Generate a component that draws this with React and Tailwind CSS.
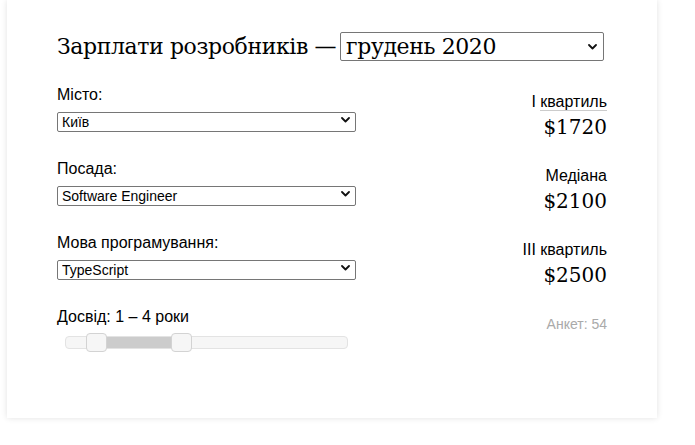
import React from 'react';

const serif = { fontFamily: '"DejaVu Serif", Georgia, serif' };

function Chevron({ className }) {
  return (
    <svg className={className} width="9" height="6" viewBox="0 0 9 6" fill="none">
      <path d="M1 1l3.5 3.5L8 1" stroke="#111" strokeWidth="1.8" strokeLinecap="round" strokeLinejoin="round" />
    </svg>
  );
}

function Select({ value }) {
  return (
    <div className="relative w-[299px] h-[20px]">
      <select
        defaultValue={value}
        className="appearance-none w-full h-full border border-[#767676] rounded-[2px] bg-white pl-[4px] text-[14px] leading-[18px] text-black font-['Liberation_Sans',Arial,sans-serif]"
      >
        <option>{value}</option>
      </select>
      <Chevron className="absolute right-[6px] top-[7px] pointer-events-none" />
    </div>
  );
}

function Field({ label, value }) {
  return (
    <div className="mb-[30px]">
      <div className="text-[16px] leading-[18px] mb-[6px]">{label}</div>
      <Select value={value} />
    </div>
  );
}

function Stat({ label, abbr, value }) {
  return (
    <div className="h-[74px]">
      <div className="text-[16px] leading-[18px]">
        {label}
        {abbr && <span className="border-b border-[#ccc]">{abbr}</span>}
      </div>
      <div className="text-[20px] leading-[26px] mt-[3px]" style={serif}>{value}</div>
    </div>
  );
}

export default function App() {
  return (
    <div className="bg-white w-[695px] h-[445px] font-['Liberation_Sans',Arial,sans-serif] text-black">
      <div className="ml-[7px] w-[650px] h-[418px] bg-white shadow-[0_0_6px_rgba(0,0,0,0.12)] px-[50px] pt-[32px]">
        <div className="flex items-center">
          <h1 className="text-[22px] leading-[29px] tracking-[-0.4px] whitespace-nowrap" style={serif}>Зарплати розробників —</h1>
          <div className="relative ml-[4px] w-[264px] h-[29px]">
            <select
              defaultValue="грудень 2020"
              className="appearance-none w-full h-full border border-[#767676] rounded-[2px] bg-white pl-[5px] text-[22px] leading-[27px] tracking-[-0.4px]"
              style={serif}
            >
              <option>грудень 2020</option>
            </select>
            <Chevron className="absolute right-[7px] top-[12px] pointer-events-none" />
          </div>
        </div>

        <div className="flex justify-between mt-[25px]">
          <div className="w-[299px]">
            <Field label="Місто:" value="Київ" />
            <Field label="Посада:" value="Software Engineer" />
            <Field label="Мова програмування:" value="TypeScript" />
            <div className="text-[16px] leading-[18px]">Досвід: 1 – 4 роки</div>
            <div className="relative mt-[10px] ml-[8px] w-[283px] h-[13px] rounded-[4px] border border-[#e3e3e3] bg-[#f6f6f6]">
              <div className="absolute left-[30px] w-[85px] top-0 bottom-0 bg-[#cccccc]" />
              <div className="absolute left-[20px] -top-[4px] w-[21px] h-[19px] rounded-[4px] border border-[#d3d3d3] bg-[#f6f6f6]" />
              <div className="absolute left-[105px] -top-[4px] w-[21px] h-[19px] rounded-[4px] border border-[#d3d3d3] bg-[#f6f6f6]" />
            </div>
          </div>
          <div className="text-right pt-[7px]">
            <Stat label="І " abbr="квартиль" value="$1720" />
            <Stat label="Медіана" value="$2100" />
            <Stat label="ІІІ квартиль" value="$2500" />
            <div className="text-[14px] leading-[18px] text-[#aaa]">Анкет: 54</div>
          </div>
        </div>
      </div>
    </div>
  );
}
